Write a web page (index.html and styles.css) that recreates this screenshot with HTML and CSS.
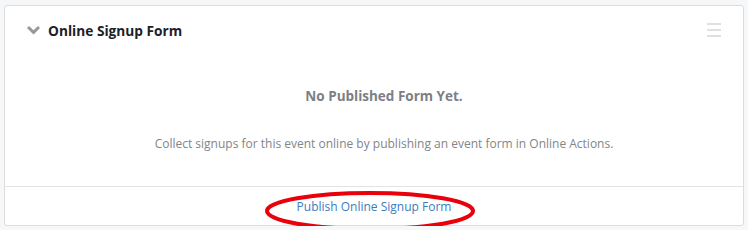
FILE: index.html
```html
<!DOCTYPE html>
<html>
<head>
<meta charset="utf-8">
<link rel="stylesheet" href="styles.css">
</head>
<body>
<div class="card">
  <div class="card-header">
    <div class="title">
      <svg class="chevron" width="13" height="9" viewBox="0 0 13 9"><path d="M0 2 L2 0 L6.5 4.3 L11 0 L13 2 L6.5 8.5 Z" fill="#96989c"/></svg>
      <span>Online Signup Form</span>
    </div>
    <div class="menu"><span></span><span></span><span></span></div>
  </div>
  <div class="card-body">
    <div class="empty-title">No Published Form Yet.</div>
    <div class="empty-text">Collect signups for this event online by publishing an event form in Online Actions.</div>
  </div>
  <div class="card-footer">
    <a class="link" href="#">Publish Online Signup Form</a>
    <svg class="circle" width="216" height="46" viewBox="0 0 216 46"><ellipse cx="108" cy="22" rx="103" ry="18" fill="none" stroke="#e8000b" stroke-width="4"/></svg>
  </div>
</div>
</body>
</html>
```
FILE: styles.css
```css
html, body { margin: 0; padding: 0; }
body {
  background: #f6f7f9;
  font-family: "Open Sans", "Noto Sans", sans-serif;
  padding: 5px 0 0 4px;
}
.card {
  width: 740px;
  height: 221px;
  box-sizing: border-box;
  background: #fff;
  border: 1px solid #dcdcdc;
  border-radius: 3px;
  display: flex;
  flex-direction: column;
}
.card-header {
  height: 48px;
  display: flex;
  align-items: center;
  justify-content: space-between;
  padding: 0 22px 0 22px;
}
.title {
  display: flex;
  align-items: center;
  gap: 8px;
  font-weight: 700;
  font-size: 13.7px;
  color: #1d2127;
}
.chevron { display: block; }
.menu {
  width: 14px;
  display: flex;
  flex-direction: column;
  gap: 4px;
}
.menu span { display: block; height: 2px; background: #e0e0e2; }
.card-body {
  flex: 1;
  text-align: center;
  color: #7d8087;
  padding: 33px 0 0 20px;
}
.empty-title { font-weight: 700; font-size: 13.5px; color: #7b7f86; }
.empty-text { font-size: 12px; margin-top: 30px; color: #828589; }
.card-footer {
  position: relative;
  height: 38px;
  border-top: 1px solid #e3e3e3;
  display: flex;
  align-items: center;
  justify-content: center;
}
.link { color: #3c7cc0; text-decoration: none; font-size: 12px; }
.circle { position: absolute; left: 257px; top: 2px; }
```
